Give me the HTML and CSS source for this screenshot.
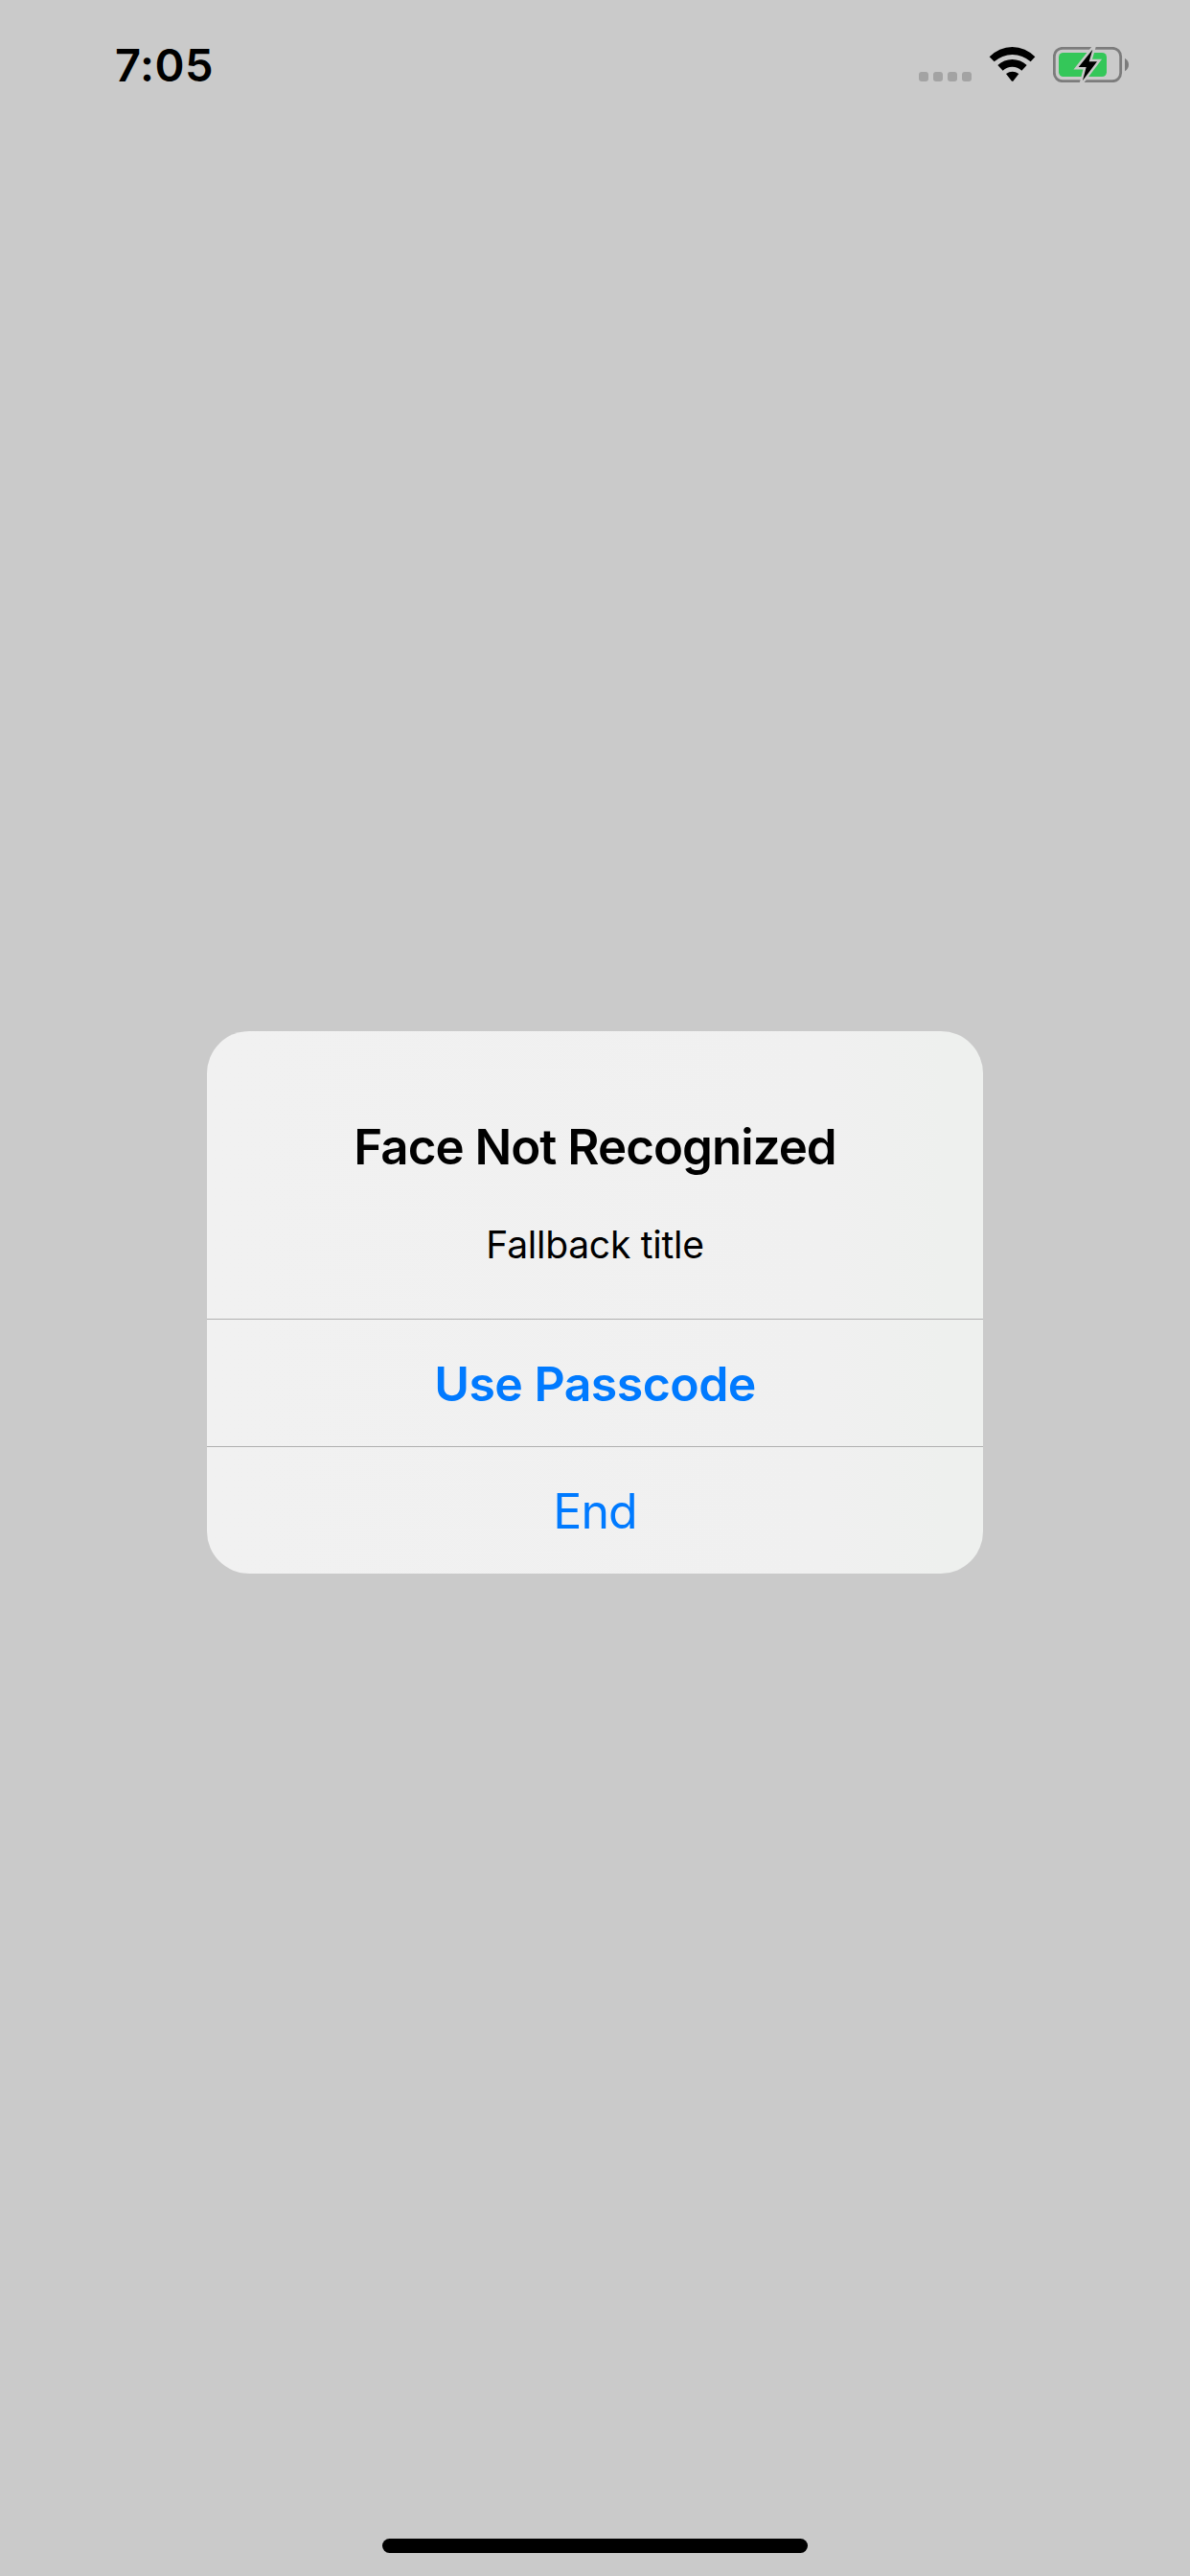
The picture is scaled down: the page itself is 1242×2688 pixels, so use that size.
FILE: index.html
```html
<!DOCTYPE html>
<html lang="en">
<head>
<meta charset="utf-8">
<title>Face Not Recognized</title>
<link rel="stylesheet" href="styles.css">
</head>
<body>
<div class="screen">
  <header class="status">
    <div class="time">7:05</div>
    <div class="indicators">
      <svg class="cells" width="55" height="10" viewBox="0 0 55 10" fill="#a3a3a3"><rect width="10" height="10" rx="3"/><rect x="15" width="10" height="10" rx="3"/><rect x="30" width="10" height="10" rx="3"/><rect x="45" width="10" height="10" rx="3"/></svg>
      <svg class="wifi" width="49" height="36" viewBox="0 0 147 108"><path d="M2 31A98 98 0 0 1 145 31L131 46A85 85 0 0 0 17 46ZM28 57A66 66 0 0 1 119 57L103 74A43.500 43.500 0 0 0 44 74ZM54 84Q74 70 94 84L76 107Q74 108 72 107Z"/></svg>
      <svg class="battery" width="79" height="37" viewBox="0 0 237 111">
        <rect x="4" y="4" width="208" height="103" rx="26" fill="none" stroke="#7c7c7c" stroke-width="8.500"/>
        <rect x="18" y="18" width="150" height="75" rx="14" fill="#34c759"/>
        <path d="M225 35Q237 43 237 55.500T225 76Z" fill="#7c7c7c"/>
        <path d="M124 8L80 63H104L93 105L138 46H113Z" fill="#000" stroke="#cacaca" stroke-width="15" stroke-miterlimit="8" paint-order="stroke"/>
      </svg>
    </div>
  </header>
  <main class="stage">
    <section class="alert" role="alertdialog">
      <div class="message">
        <h1 class="title">Face Not Recognized</h1>
        <p class="subtitle">Fallback title</p>
      </div>
      <button class="action primary"><span>Use Passcode</span></button>
      <button class="action"><span>End</span></button>
    </section>
  </main>
  <footer class="home"><div class="home-bar"></div></footer>
</div>
</body>
</html>
```
FILE: styles.css
```css
* { box-sizing: border-box; }
body { margin: 0; background: #cacaca; font-family: Inter, "Liberation Sans", sans-serif; color: #000; }
.screen { width: 1242px; height: 2688px; display: flex; flex-direction: column; overflow: hidden; }
.status { height: 132px; flex: none; display: flex; justify-content: space-between; padding: 0 64px 0 120px; }
.time { font-size: 47px; font-weight: 600; line-height: 56px; padding-top: 40px; letter-spacing: 0.5px; }
.indicators { display: flex; align-items: flex-start; }
.cells { margin-top: 75px; }
.wifi { margin: 49px 18px 0; }
.battery { margin-top: 49px; }
.stage { flex: 1; padding-top: 944px; }
.alert { width: 810px; height: 566px; margin: 0 auto; border-radius: 44px; overflow: hidden; display: flex; flex-direction: column; background: linear-gradient(90deg, #f1f1f1 0%, #f0f0f0 80%, #eef0ee 95%, #eef0ee 100%); }
.message { height: 300px; flex: none; text-align: center; padding-top: 90px; }
.title { margin: 0; font-size: 51px; font-weight: 600; line-height: 62px; letter-spacing: -0.95px; }
.subtitle { margin: 47px 0 0; font-size: 39px; line-height: 48px; letter-spacing: -0.25px; }
.action { height: 133px; margin: 0; padding: 1px 0 0; border: 0; border-top: 1px solid #b0b0b0; background: none; color: #007aff; font: 400 50px/60px Inter, "Liberation Sans", sans-serif; letter-spacing: -0.9px; }
.primary { font-weight: 600; letter-spacing: -0.55px; }
.home { height: 39px; flex: none; display: flex; justify-content: center; }
.home-bar { width: 444px; height: 15px; border-radius: 8px; background: #000; }
```
